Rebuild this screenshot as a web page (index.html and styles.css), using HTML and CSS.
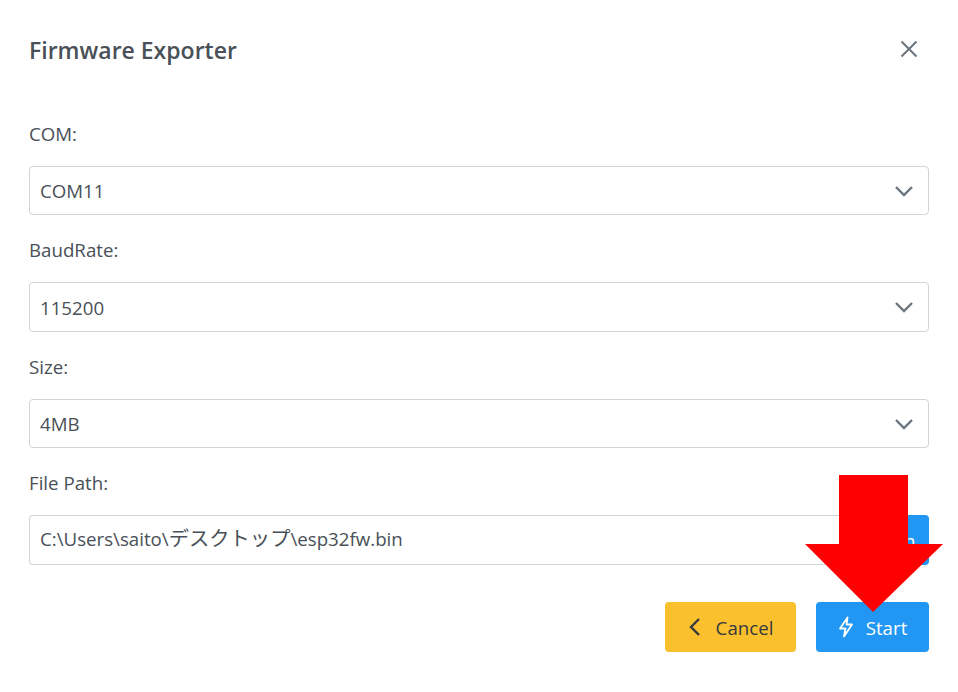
FILE: index.html
```html
<!DOCTYPE html>
<html lang="en">
<head>
  <meta charset="UTF-8" />
  <meta name="viewport" content="width=device-width, initial-scale=1" />
  <title>Firmware Exporter</title>
  <link rel="stylesheet" href="styles.css">
</head>
<body>

<div class="modal">
  <header class="modal-head">
    <h2>Firmware Exporter</h2>
    <button class="close" aria-label="Close">
      <svg width="18" height="18" viewBox="0 0 18 18"><path d="M1.5 1.5 L16.5 16.5 M16.5 1.5 L1.5 16.5" /></svg>
    </button>
  </header>

  <div class="field">
    <label>COM:</label>
    <div class="select">
      <span>COM11</span>
      <svg class="caret" width="20" height="12" viewBox="0 0 20 12"><path d="M2 2 L10 10 L18 2" /></svg>
    </div>
  </div>

  <div class="field">
    <label>BaudRate:</label>
    <div class="select">
      <span>115200</span>
      <svg class="caret" width="20" height="12" viewBox="0 0 20 12"><path d="M2 2 L10 10 L18 2" /></svg>
    </div>
  </div>

  <div class="field">
    <label>Size:</label>
    <div class="select">
      <span>4MB</span>
      <svg class="caret" width="20" height="12" viewBox="0 0 20 12"><path d="M2 2 L10 10 L18 2" /></svg>
    </div>
  </div>

  <div class="field">
    <label>File Path:</label>
    <div class="input-group">
      <div class="path">C:\Users\saito\<span class="kana">デスクトップ</span>\esp32fw.bin</div>
      <button class="btn-open">Open</button>
    </div>
  </div>

  <footer class="actions">
    <button class="btn btn-cancel">
      <svg width="14" height="20" viewBox="0 0 14 20"><path d="M11 2 L3 10 L11 18" /></svg>
      <span>Cancel</span>
    </button>
    <button class="btn btn-start">
      <svg width="16" height="22" viewBox="0 0 16 22"><path d="M9.5 1.5 L2 12.5 H7.5 L6 20.5 L14 8.5 H8.5 Z" /></svg>
      <span>Start</span>
    </button>
  </footer>
</div>

<!-- annotation drawn over the dialog -->
<svg class="arrow" width="138" height="137" viewBox="0 0 138 137"><polygon points="34,0 103,0 103,69 138,69 68,137 0,69 34,69" /></svg>

</body>
</html>
```

FILE: styles.css
```css
body {
  margin: 0;
  background: #fff;
  color: #495057;
  font-family: "Open Sans", "Noto Sans CJK JP", sans-serif;
  font-size: 18.7px;
}
.modal { padding: 0 29px; position: relative; }
.modal-head {
  display: flex;
  justify-content: space-between;
  align-items: center;
  height: 100px;
  margin-bottom: 17.75px;
}
.modal-head h2 { margin: 0; font-size: 23px; font-weight: 600; }
.close { background: none; border: none; padding: 0; margin-right: 11px; margin-top: -2px; cursor: pointer; line-height: 0; }
.close path { fill: none; stroke: #6c757d; stroke-width: 2; }

.field { margin-bottom: 19px; }
.field label { display: block; height: 32px; line-height: 31px; margin-bottom: 16px; }
.select, .input-group {
  display: flex;
  align-items: center;
  height: 49.5px;
  box-sizing: border-box;
}
.select {
  justify-content: space-between;
  border: 1px solid #ced4da;
  border-radius: 4px;
  padding: 0 14px 0 10px;
}
.caret path { fill: none; stroke: #6c757d; stroke-width: 2.4; }

.path {
  flex: 1;
  height: 100%;
  box-sizing: border-box;
  border: 1px solid #ced4da;
  border-right: none;
  border-radius: 4px 0 0 4px;
  padding: 0 10px;
  line-height: 46px;
}
.kana { font-size: 20.3px; line-height: 1; }
.btn-open {
  width: 80px;
  height: 100%;
  background: #2196f3;
  color: #fff;
  border: none;
  border-radius: 0 4px 4px 0;
  font: inherit;
  padding: 0 0 0 5px;
}

.actions { display: flex; justify-content: flex-end; gap: 20px; margin-top: 37.25px; }
.btn {
  display: flex;
  align-items: center;
  justify-content: center;
  height: 50px;
  border: none;
  border-radius: 4px;
  font: inherit;
  cursor: pointer;
}
.btn-cancel { width: 131px; gap: 14px; background: #fbc02d; color: #343a40; }
.btn-cancel path { fill: none; stroke: #343a40; stroke-width: 2.4; }
.btn-start { width: 113px; gap: 12px; background: #2196f3; color: #fff; }
.btn-start path { fill: none; stroke: #fff; stroke-width: 1.8; stroke-linejoin: round; }

.arrow { position: absolute; left: 805px; top: 475px; }
.arrow polygon { fill: #f00; }
```
